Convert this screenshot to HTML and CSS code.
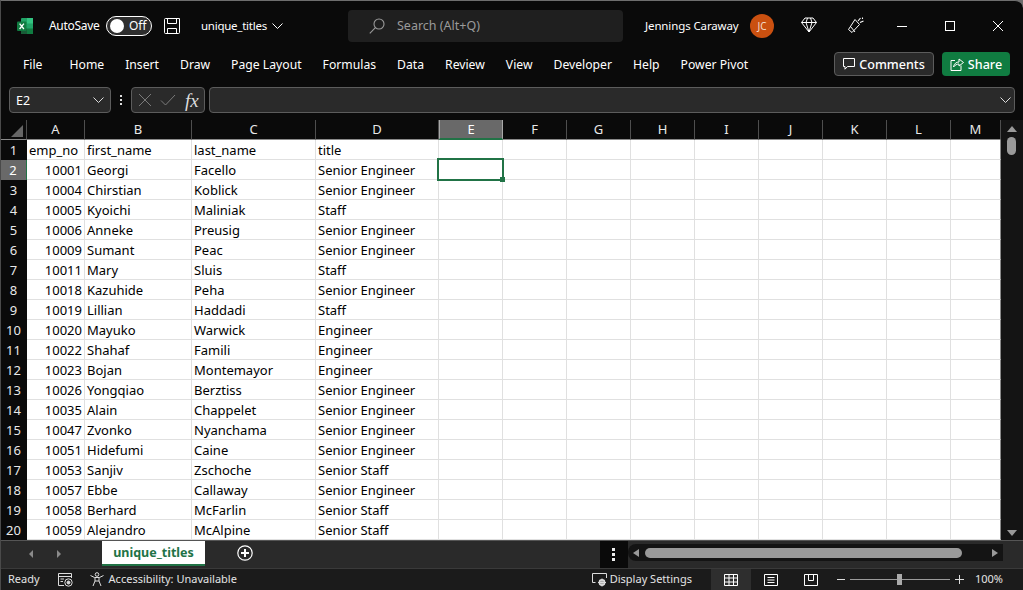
FILE: index.html
```html
<!DOCTYPE html>
<html lang="en">
<head>
    <meta charset="UTF-8">
    <meta name="viewport" content="width=device-width, initial-scale=1.0">
    <title>unique_titles - Excel</title>
    <link rel="stylesheet" href="styles.css">
</head>
<body>

<div class="window">

    <!-- title bar -->
    <header class="titlebar">
        <svg class="logo" width="16" height="16" viewBox="0 0 16 16">
            <rect x="4" y="0" width="12" height="16" rx="1" fill="#21a366"/>
            <rect x="10" y="0" width="6" height="5.5" fill="#33c481"/>
            <rect x="4" y="10.5" width="6" height="5.5" fill="#185c37"/>
            <rect x="10" y="10.5" width="6" height="5.5" fill="#107c41"/>
            <rect x="0" y="3.5" width="9.5" height="9.5" rx="1" fill="#107c41"/>
            <path d="M2.6 5.6 L6.9 11 M6.9 5.6 L2.6 11" stroke="#fff" stroke-width="1.3"/>
        </svg>
        <span class="autosave">AutoSave</span>
        <div class="toggle"><span class="knob"></span><span>Off</span></div>
        <svg class="save" width="16" height="16" viewBox="0 0 16 16" fill="none" stroke="#fff">
            <path d="M0.5 1.5 a1 1 0 0 1 1 -1 H15.5 V14.5 a1 1 0 0 1 -1 1 H1.5 a1 1 0 0 1 -1 -1 Z"/>
            <path d="M3.5 0.5 V5.5 H12.5 V0.5 M3.5 15.5 V10.5 H12.5 V15.5"/>
        </svg>
        <span class="docname">unique_titles</span>
        <svg class="doc-chevron" width="11" height="6" viewBox="0 0 11 6" fill="none" stroke="#fff"><path d="M0.5 0.5 L5.5 5.5 L10.5 0.5"/></svg>
        <div class="search">
            <svg width="16" height="16" viewBox="0 0 16 16" fill="none" stroke="#9a9a9a" stroke-width="1.1"><circle cx="10" cy="6" r="5"/><path d="M6.4 9.6 L0.8 15.4"/></svg>
            <span>Search (Alt+Q)</span>
        </div>
        <span class="username">Jennings Caraway</span>
        <div class="avatar">JC</div>
        <svg class="diamond" width="16" height="16" viewBox="0 0 16 16" fill="none" stroke="#fff"><path d="M4 1 H12 L15.5 5.5 L8 15 L0.5 5.5 Z M0.5 5.5 H15.5 M5 5.5 L8 15 L11 5.5 M5 5.5 L6.5 1 M11 5.5 L9.5 1"/></svg>
        <svg class="party" width="16" height="16" viewBox="0 0 16 16" fill="none" stroke="#fff"><path d="M0.5 12.5 L7 2.5 L11.5 7.5 L4 15.5 Z M2.5 9.5 L7 15"/><path d="M10 4 L12.5 1 M12 5.5 L15.5 4 M14.5 0.5 V2" stroke-width="1.1"/></svg>
        <div class="winbtns">
            <svg width="10" height="10" viewBox="0 0 10 10" stroke="#fff" fill="none"><path d="M0 5.5 H10"/></svg>
            <svg width="10" height="10" viewBox="0 0 10 10" stroke="#fff" fill="none"><rect x="0.5" y="0.5" width="9" height="9"/></svg>
            <svg width="10" height="10" viewBox="0 0 10 10" stroke="#fff" fill="none"><path d="M0 0 L10 10 M10 0 L0 10"/></svg>
        </div>
    </header>

    <!-- ribbon tabs -->
    <nav class="ribbon">
        <span class="tab-file">File</span>
        <span>Home</span>
        <span>Insert</span>
        <span>Draw</span>
        <span>Page Layout</span>
        <span>Formulas</span>
        <span>Data</span>
        <span>Review</span>
        <span>View</span>
        <span>Developer</span>
        <span>Help</span>
        <span>Power Pivot</span>
        <div class="ribbon-actions">
            <button class="btn-comments">
                <svg width="12" height="12" viewBox="0 0 12 12" fill="none" stroke="#fff"><path d="M0.5 0.5 H11.5 V8.5 H4.5 L2 11.2 V8.5 H0.5 Z"/></svg>
                Comments
            </button>
            <button class="btn-share">
                <svg width="14" height="14" viewBox="0 0 14 14" fill="none" stroke="#fff"><path d="M5 3.5 H1 V13.5 H11 V8.5"/><path d="M3.5 10 C4 6.5 6.5 5 9 5 V2 L13.5 5.5 L9 9 V7 C7 7 5 8 3.5 10 Z"/></svg>
                Share
            </button>
        </div>
    </nav>

    <!-- formula bar -->
    <div class="formulabar">
        <div class="namebox">
            <span>E2</span>
            <svg width="11" height="6" viewBox="0 0 11 6" fill="none" stroke="#ddd"><path d="M0.5 0.5 L5.5 5.5 L10.5 0.5"/></svg>
        </div>
        <div class="fdots"><i></i><i></i><i></i></div>
        <div class="fxbox">
            <svg width="14" height="14" viewBox="0 0 14 14" fill="none" stroke="#7a7a7a"><path d="M1 1 L13 13 M13 1 L1 13"/></svg>
            <svg width="16" height="12" viewBox="0 0 16 12" fill="none" stroke="#7a7a7a"><path d="M1 6.5 L5.5 11 L15 1"/></svg>
            <span class="fx">fx</span>
        </div>
        <div class="finput">
            <svg width="11" height="6" viewBox="0 0 11 6" fill="none" stroke="#ddd"><path d="M0.5 0.5 L5.5 5.5 L10.5 0.5"/></svg>
        </div>
    </div>

    <!-- sheet -->
    <div class="sheetarea">
        <table class="grid">
            <colgroup>
                <col class="c-row"><col class="c-a"><col class="c-b"><col class="c-c"><col class="c-d">
                <col class="c-n"><col class="c-n"><col class="c-n"><col class="c-n"><col class="c-n"><col class="c-n"><col class="c-n"><col class="c-n"><col class="c-last">
            </colgroup>
            <thead>
                <tr>
                    <th class="corner"><span class="tri"></span></th>
                    <th>A</th><th>B</th><th>C</th><th>D</th><th class="col-on">E</th><th>F</th><th>G</th><th>H</th><th>I</th><th>J</th><th>K</th><th>L</th><th>M</th>
                </tr>
            </thead>
            <tbody>
                <tr><th>1</th><td>emp_no</td><td>first_name</td><td>last_name</td><td>title</td><td></td><td></td><td></td><td></td><td></td><td></td><td></td><td></td><td></td></tr>
                <tr><th class="row-on">2</th><td class="num">10001</td><td>Georgi</td><td>Facello</td><td>Senior Engineer</td><td class="active"></td><td></td><td></td><td></td><td></td><td></td><td></td><td></td><td></td></tr>
                <tr><th>3</th><td class="num">10004</td><td>Chirstian</td><td>Koblick</td><td>Senior Engineer</td><td></td><td></td><td></td><td></td><td></td><td></td><td></td><td></td><td></td></tr>
                <tr><th>4</th><td class="num">10005</td><td>Kyoichi</td><td>Maliniak</td><td>Staff</td><td></td><td></td><td></td><td></td><td></td><td></td><td></td><td></td><td></td></tr>
                <tr><th>5</th><td class="num">10006</td><td>Anneke</td><td>Preusig</td><td>Senior Engineer</td><td></td><td></td><td></td><td></td><td></td><td></td><td></td><td></td><td></td></tr>
                <tr><th>6</th><td class="num">10009</td><td>Sumant</td><td>Peac</td><td>Senior Engineer</td><td></td><td></td><td></td><td></td><td></td><td></td><td></td><td></td><td></td></tr>
                <tr><th>7</th><td class="num">10011</td><td>Mary</td><td>Sluis</td><td>Staff</td><td></td><td></td><td></td><td></td><td></td><td></td><td></td><td></td><td></td></tr>
                <tr><th>8</th><td class="num">10018</td><td>Kazuhide</td><td>Peha</td><td>Senior Engineer</td><td></td><td></td><td></td><td></td><td></td><td></td><td></td><td></td><td></td></tr>
                <tr><th>9</th><td class="num">10019</td><td>Lillian</td><td>Haddadi</td><td>Staff</td><td></td><td></td><td></td><td></td><td></td><td></td><td></td><td></td><td></td></tr>
                <tr><th>10</th><td class="num">10020</td><td>Mayuko</td><td>Warwick</td><td>Engineer</td><td></td><td></td><td></td><td></td><td></td><td></td><td></td><td></td><td></td></tr>
                <tr><th>11</th><td class="num">10022</td><td>Shahaf</td><td>Famili</td><td>Engineer</td><td></td><td></td><td></td><td></td><td></td><td></td><td></td><td></td><td></td></tr>
                <tr><th>12</th><td class="num">10023</td><td>Bojan</td><td>Montemayor</td><td>Engineer</td><td></td><td></td><td></td><td></td><td></td><td></td><td></td><td></td><td></td></tr>
                <tr><th>13</th><td class="num">10026</td><td>Yongqiao</td><td>Berztiss</td><td>Senior Engineer</td><td></td><td></td><td></td><td></td><td></td><td></td><td></td><td></td><td></td></tr>
                <tr><th>14</th><td class="num">10035</td><td>Alain</td><td>Chappelet</td><td>Senior Engineer</td><td></td><td></td><td></td><td></td><td></td><td></td><td></td><td></td><td></td></tr>
                <tr><th>15</th><td class="num">10047</td><td>Zvonko</td><td>Nyanchama</td><td>Senior Engineer</td><td></td><td></td><td></td><td></td><td></td><td></td><td></td><td></td><td></td></tr>
                <tr><th>16</th><td class="num">10051</td><td>Hidefumi</td><td>Caine</td><td>Senior Engineer</td><td></td><td></td><td></td><td></td><td></td><td></td><td></td><td></td><td></td></tr>
                <tr><th>17</th><td class="num">10053</td><td>Sanjiv</td><td>Zschoche</td><td>Senior Staff</td><td></td><td></td><td></td><td></td><td></td><td></td><td></td><td></td><td></td></tr>
                <tr><th>18</th><td class="num">10057</td><td>Ebbe</td><td>Callaway</td><td>Senior Engineer</td><td></td><td></td><td></td><td></td><td></td><td></td><td></td><td></td><td></td></tr>
                <tr><th>19</th><td class="num">10058</td><td>Berhard</td><td>McFarlin</td><td>Senior Staff</td><td></td><td></td><td></td><td></td><td></td><td></td><td></td><td></td><td></td></tr>
                <tr><th>20</th><td class="num">10059</td><td>Alejandro</td><td>McAlpine</td><td>Senior Staff</td><td></td><td></td><td></td><td></td><td></td><td></td><td></td><td></td><td></td></tr>
            </tbody>
        </table>
        <div class="vscroll">
            <span class="arrow-up"></span>
            <span class="vthumb"></span>
            <span class="arrow-down"></span>
        </div>
    </div>

    <!-- sheet tabs + horizontal scrollbar -->
    <div class="sheetbar">
        <span class="nav-left"></span>
        <span class="nav-right"></span>
        <div class="sheettab">unique_titles</div>
        <svg class="addsheet" width="16" height="16" viewBox="0 0 16 16" fill="none" stroke="#fff"><circle cx="8" cy="8" r="7.2" stroke-width="1.2"/><path d="M8 4 V12 M4 8 H12" stroke-width="2"/></svg>
        <div class="sheetdots"><i></i><i></i><i></i></div>
        <div class="hscroll">
            <span class="h-left"></span>
            <span class="hthumb"></span>
            <span class="h-right"></span>
        </div>
    </div>

    <!-- status bar -->
    <footer class="statusbar">
        <span class="ready">Ready</span>
        <svg class="macro" width="15" height="14" viewBox="0 0 15 14" fill="none" stroke="#ddd"><path d="M13.5 5 V0.5 H0.5 V12.5 H6 M0.5 3.5 H13.5 M2.5 6 H6 M2.5 8.5 H5"/><circle cx="10.5" cy="9.5" r="3.7"/><circle cx="10.5" cy="9.5" r="1.5" fill="#ddd"/></svg>
        <svg class="access" width="15" height="15" viewBox="0 0 15 15" fill="none" stroke="#ddd"><circle cx="7" cy="2.5" r="1.8"/><path d="M0.5 3.5 L4.5 5.5 H9.5 L13.5 3.5 M5 5.5 V9 L3 14 M9 5.5 V9 L11 14 M5 9 H9"/></svg>
        <span class="accesstext">Accessibility: Unavailable</span>
        <svg class="display" width="15" height="14" viewBox="0 0 15 14" fill="none" stroke="#ddd"><path d="M3.5 9.5 H0.5 V0.5 H14.5 V5"/><circle cx="10" cy="9.5" r="2.6" stroke-width="1.6"/><path d="M10 5.5 V13.5 M6 9.5 H14 M7.5 7 L12.5 12 M12.5 7 L7.5 12"/></svg>
        <span class="displaytext">Display Settings</span>
        <div class="viewbtn view-on">
            <svg width="14" height="12" viewBox="0 0 14 12" fill="none" stroke="#fff"><path d="M0.5 0.5 H13.5 V11.5 H0.5 Z M0.5 4 H13.5 M0.5 8 H13.5 M5 0.5 V11.5 M9.5 0.5 V11.5"/></svg>
        </div>
        <div class="viewbtn">
            <svg width="14" height="12" viewBox="0 0 14 12" fill="none" stroke="#fff"><path d="M0.5 0.5 H13.5 V11.5 H0.5 Z M3.5 3.5 H10.5 M3.5 6 H10.5 M3.5 8.5 H10.5"/></svg>
        </div>
        <div class="viewbtn">
            <svg width="14" height="12" viewBox="0 0 14 12" fill="none" stroke="#fff"><path d="M0.5 0.5 H13.5 V11.5 H0.5 Z M4.5 0.5 V6.5 H9.5 V0.5"/></svg>
        </div>
        <div class="zoomer">
            <span class="zminus"></span>
            <div class="ztrack"><span class="zthumb"></span></div>
            <span class="zplus"></span>
        </div>
        <span class="zoomtext">100%</span>
    </footer>

</div>

</body>
</html>
```

FILE: styles.css
```css
* {
    box-sizing: border-box;
}

html, body {
    margin: 0;
    padding: 0;
    background-color: #6e6e6e;
}

body {
    font-family: "Noto Sans", Arial, sans-serif;
    font-size: 13px;
    color: #fff;
    width: 1023px;
    height: 590px;
    overflow: hidden;
}

.window {
    width: 1023px;
    height: 590px;
    background-color: #0a0a0a;
    border-top: 1px solid #6e6e6e;
    border-left: 1px solid #4a4a4a;
    border-radius: 0 8px 0 0;
    display: flex;
    flex-direction: column;
    overflow: hidden;
}

/* title bar */
.titlebar {
    height: 49px;
    flex: none;
    display: flex;
    align-items: center;
    padding-left: 16px;
}

.autosave {
    margin-left: 16px;
    width: 50px;
    font-size: 12px;
    letter-spacing: -0.3px;
    white-space: nowrap;
}

.toggle {
    width: 46px;
    height: 20px;
    margin-left: 7px;
    border: 1px solid #fff;
    border-radius: 10px;
    background-color: #2e2e2e;
    display: flex;
    align-items: center;
    padding-left: 3px;
    font-size: 12px;
    gap: 5px;
}

.knob {
    width: 14px;
    height: 14px;
    border-radius: 50%;
    background-color: #fff;
    flex: none;
}

.save {
    margin-left: 12px;
}

.docname {
    margin-left: 21px;
    width: 67px;
    font-size: 11.5px;
    letter-spacing: -0.25px;
    white-space: nowrap;
}

.doc-chevron {
    margin-left: 4px;
}

.search {
    width: 275px;
    height: 32px;
    margin-left: 65px;
    background-color: #1f1f1f;
    border-radius: 4px;
    display: flex;
    align-items: center;
    padding-left: 21px;
    gap: 12px;
    color: #9a9a9a;
    font-size: 12.5px;
}

.username {
    margin-left: 22px;
    width: 94px;
    font-size: 11.5px;
    letter-spacing: -0.12px;
    white-space: nowrap;
}

.avatar {
    width: 24px;
    height: 24px;
    margin-left: 11px;
    border-radius: 50%;
    background-color: #ca5010;
    display: flex;
    align-items: center;
    justify-content: center;
    font-size: 10px;
    color: #f3d9c9;
}

.diamond {
    margin-left: 27px;
    margin-top: -2px;
}

.party {
    margin-left: 31px;
    margin-top: -2px;
}

.winbtns {
    display: flex;
    gap: 38px;
    margin-left: 33px;
}

/* ribbon tabs */
.ribbon {
    height: 37px;
    flex: none;
    display: flex;
    align-items: center;
    padding-left: 22px;
    padding-bottom: 9px;
    gap: 21px;
    font-size: 12.2px;
}

.tab-file {
    margin-right: 6px;
}

.ribbon-actions {
    margin-left: auto;
    margin-right: 13px;
    display: flex;
    gap: 8px;
}

.ribbon button {
    height: 24px;
    font-family: inherit;
    font-size: 12.6px;
    font-weight: 500;
    color: #fff;
    border-radius: 4px;
    display: flex;
    align-items: center;
    justify-content: center;
    padding: 0;
    gap: 4px;
}

.btn-comments {
    width: 100px;
    background-color: #2a2a2a;
    border: 1px solid #5c5c5c;
}

.btn-share {
    width: 68px;
    background-color: #107c41;
    border: none;
}

/* formula bar */
.formulabar {
    height: 26px;
    flex: none;
    display: flex;
    padding-left: 8px;
    padding-right: 8px;
}

.namebox, .fxbox, .finput {
    height: 26px;
    background-color: #2a2a2a;
    border: 1px solid #5c5c5c;
    border-radius: 4px;
    display: flex;
    align-items: center;
}

.namebox {
    width: 102px;
    justify-content: space-between;
    padding: 0 6px 0 6px;
    font-size: 12.5px;
}

.fdots {
    width: 20px;
    display: flex;
    flex-direction: column;
    align-items: center;
    justify-content: center;
    gap: 2px;
}

.fdots i {
    display: block;
    width: 2px;
    height: 2px;
    background-color: #ddd;
}

.fxbox {
    width: 74px;
    padding-left: 6px;
    gap: 8px;
}

.fx {
    font-family: "Liberation Serif", serif;
    font-style: italic;
    font-size: 19px;
    line-height: 1;
    color: #ddd;
    margin-left: 1px;
}

.finput {
    flex: 1;
    margin-left: 4px;
    justify-content: flex-end;
    padding-right: 3px;
}

/* sheet */
.sheetarea {
    margin-top: 7px;
    height: 420px;
    flex: none;
    display: flex;
    margin-left: -1px;
}

.grid {
    width: 1001px;
    height: 420px;
    table-layout: fixed;
    border-collapse: separate;
    border-spacing: 0;
    flex: none;
    font-size: 13px;
    color: #000;
}

.c-row { width: 27px; }
.c-a { width: 58px; }
.c-b { width: 107px; }
.c-c { width: 124px; }
.c-d { width: 123px; }
.c-n { width: 64px; }
.c-last { width: 50px; }

.grid tr {
    height: 20px;
}

.grid th {
    font-weight: 400;
    font-size: 13px;
    line-height: 16px;
    color: #e8e8e8;
    background-color: #0a0a0a;
    padding: 0;
    text-align: center;
}

.grid thead th {
    border-right: 1px solid #4e4e4e;
    border-bottom: 1px solid #8a8a8a;
    padding-bottom: 1px;
}

.grid thead th.col-on {
    background-color: #696969;
    color: #fff;
    border-left: 1px solid #a8a8a8;
    border-right: 1px solid #a8a8a8;
    border-bottom: 2px solid #217346;
    padding-bottom: 0;
}

.corner {
    position: relative;
}

.tri {
    position: absolute;
    right: 3px;
    bottom: 2px;
    width: 0;
    height: 0;
    border-left: 12px solid transparent;
    border-bottom: 12px solid #666;
}

.grid tbody th.row-on {
    background-color: #696969;
    color: #fff;
    border-right: 1px solid #217346;
}

.grid td {
    background-color: #fff;
    border-right: 1px solid #e0e0e0;
    border-bottom: 1px solid #e0e0e0;
    padding: 1px 2px 0;
    white-space: nowrap;
    overflow: hidden;
    line-height: 18px;
}

.grid td:last-child {
    border-right-color: #8a8a8a;
}

.grid td.num {
    text-align: right;
}

.grid td.active {
    position: relative;
    overflow: visible;
}

.grid td.active::before {
    content: "";
    position: absolute;
    left: -2px;
    top: -2px;
    right: -2px;
    bottom: -2px;
    border: 2px solid #217346;
}

.grid td.active::after {
    content: "";
    position: absolute;
    right: -3px;
    bottom: -3px;
    width: 5px;
    height: 5px;
    background-color: #217346;
}

.vscroll {
    width: 22px;
    flex: none;
    padding-right: 1px;
    background-color: #141414;
    display: flex;
    flex-direction: column;
    align-items: center;
}

.vthumb {
    width: 9px;
    height: 18px;
    margin-top: 5px;
    border-radius: 5px;
    background-color: #9a9a9a;
}

.arrow-up, .arrow-down {
    width: 0;
    height: 0;
    border-left: 5px solid transparent;
    border-right: 5px solid transparent;
}

.arrow-up {
    margin-top: 6px;
    border-bottom: 6px solid #9a9a9a;
}

.arrow-down {
    margin-top: auto;
    margin-bottom: 4px;
    border-top: 6px solid #9a9a9a;
}

/* sheet tabs */
.sheetbar {
    height: 28px;
    flex: none;
    background-color: #2a2a2a;
    border-top: 1px solid #555;
    display: flex;
    align-items: flex-start;
    padding-left: 28px;
}

.nav-left, .nav-right {
    width: 0;
    height: 0;
    margin-top: 9px;
    border-top: 4px solid transparent;
    border-bottom: 4px solid transparent;
}

.nav-left {
    border-right: 4px solid #8a8a8a;
}

.nav-right {
    margin-left: 24px;
    border-left: 4px solid #8a8a8a;
}

.sheettab {
    width: 103px;
    height: 25px;
    margin-left: 41px;
    background-color: #fff;
    border-bottom: 2px solid #217346;
    color: #217346;
    font-weight: 700;
    font-size: 12.5px;
    text-align: center;
    line-height: 23px;
}

.addsheet {
    margin-left: 32px;
    margin-top: 4px;
}

.sheetdots {
    width: 28px;
    height: 27px;
    margin-left: auto;
    padding-right: 1px;
    background-color: #0a0a0a;
    display: flex;
    flex-direction: column;
    align-items: center;
    justify-content: center;
    gap: 2px;
}

.sheetdots i {
    display: block;
    width: 3px;
    height: 3px;
    background-color: #eee;
}

.hscroll {
    width: 375px;
    height: 17px;
    margin-top: 3px;
    margin-right: 20px;
    background-color: #141414;
    border-radius: 8px 0 0 8px;
    display: flex;
    align-items: center;
    padding-left: 5px;
}

.hthumb {
    width: 317px;
    height: 10px;
    margin-left: 6px;
    border-radius: 5px;
    background-color: #9a9a9a;
}

.h-left, .h-right {
    width: 0;
    height: 0;
    border-top: 4px solid transparent;
    border-bottom: 4px solid transparent;
}

.h-left {
    border-right: 6px solid #9a9a9a;
}

.h-right {
    margin-left: 30px;
    border-left: 6px solid #9a9a9a;
}

/* status bar */
.statusbar {
    flex: 1;
    background-color: #1b1b1b;
    border-top: 1px solid #3a3a3a;
    display: flex;
    align-items: center;
    font-size: 11px;
    line-height: 19px;
    color: #e4e4e4;
    padding-left: 7px;
}

.ready, .accesstext, .displaytext, .zoomtext {
    padding-bottom: 2px;
}

.macro {
    margin-left: 18px;
}

.access {
    margin-left: 17px;
}

.accesstext {
    margin-left: 4px;
}

.display {
    margin-left: auto;
}

.displaytext {
    margin-left: 3px;
    margin-right: 19px;
}

.viewbtn {
    width: 40px;
    height: 100%;
    display: flex;
    align-items: center;
    justify-content: center;
}

.view-on {
    background-color: #2e2e2e;
}

.zoomer {
    display: flex;
    align-items: center;
    margin-left: 6px;
}

.zminus, .zplus {
    width: 8px;
    height: 1px;
    background-color: #ddd;
    position: relative;
}

.zplus {
    width: 9px;
}

.zplus::after {
    content: "";
    position: absolute;
    left: 4px;
    top: -4px;
    width: 1px;
    height: 9px;
    background-color: #ddd;
}

.ztrack {
    width: 100px;
    height: 1px;
    margin: 0 5px;
    background-color: #9a9a9a;
    display: flex;
    align-items: center;
    justify-content: center;
}

.zthumb {
    width: 5px;
    height: 11px;
    flex: none;
    background-color: #aaa;
}

.zoomtext {
    margin-left: 11px;
    margin-right: 20px;
}
```
